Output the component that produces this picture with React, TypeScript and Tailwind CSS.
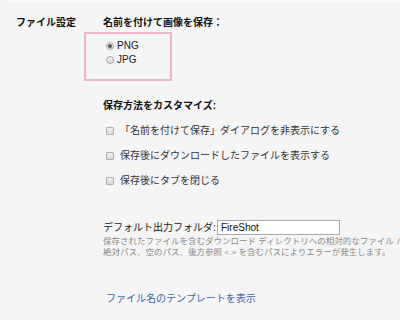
import React from 'react';

const Radio: React.FC<{ checked?: boolean; label: string }> = ({ checked, label }) => (
  <div className="flex items-center gap-[3px] h-[14px]">
    <span className="w-[8px] h-[8px] rounded-full border border-[#a8a8a8] bg-gradient-to-b from-[#f4f4f4] to-[#d8d8d8] flex items-center justify-center">
      {checked && <span className="w-[4px] h-[4px] rounded-full bg-[#555]" />}
    </span>
    <span className="text-[10px] leading-[14px] text-[#222]">{label}</span>
  </div>
);

const Check: React.FC<{ label: string }> = ({ label }) => (
  <div className="flex items-center gap-[6px] h-[14px] pl-[3px]">
    <span className="w-[8px] h-[8px] rounded-[1px] border border-[#b0b0b0] bg-gradient-to-b from-[#f2f2f2] to-[#d6d6d6]" />
    <span className="text-[10px] leading-[14px] text-[#333] whitespace-nowrap">{label}</span>
  </div>
);

export default function App() {
  return (
    <div
      className="w-[400px] h-[320px] overflow-hidden bg-[#f5f5f5] flex flex-col"
      style={{ fontFamily: '"Liberation Sans", "Noto Sans CJK JP", sans-serif' }}
    >
      <div className="h-[2px] ml-2 bg-[#fbfbfb]" />
      <div className="flex pt-[14px]">
        <div className="w-[103px] pl-[16px] shrink-0">
          <h2 className="text-[10px] leading-[14px] font-bold text-[#111]">ファイル設定</h2>
        </div>
        <div className="flex flex-col flex-1 min-w-0">
          <h3 className="text-[10px] leading-[14px] font-bold text-[#111]">名前を付けて画像を保存：</h3>

          <div className="mt-[2px] ml-[-19px] w-[88px] h-[49px] border-2 border-[#f2b3cf] pt-[5px] pl-[20px]">
            <Radio checked label="PNG" />
            <Radio label="JPG" />
          </div>

          <h3 className="mt-[18px] text-[10px] leading-[14px] font-bold text-[#111]">保存方法をカスタマイズ:</h3>
          <div className="mt-[11px] flex flex-col gap-[11px]">
            <Check label="「名前を付けて保存」ダイアログを非表示にする" />
            <Check label="保存後にダウンロードしたファイルを表示する" />
            <Check label="保存後にタブを閉じる" />
          </div>

          <div className="mt-[32px] flex items-center h-[15px]">
            <span className="text-[10px] leading-[14px] text-[#222] whitespace-nowrap w-[114px]">デフォルト出力フォルダ:</span>
            <input
              readOnly
              value="FireShot"
              className="w-[123px] h-[15px] border border-[#a9a9a9] bg-white px-[3px] text-[10px] text-[#111] outline-none"
            />
          </div>
          <div className="mt-[1px] text-[8.5px] leading-[11px] text-[#8a8a8a] whitespace-nowrap overflow-hidden">
            <p>保存されたファイルを含むダウンロード ディレクトリへの相対的なファイル パス</p>
            <p>絶対パス、空のパス、後方参照 <span className="text-[7px] italic">«..»</span> を含むパスによりエラーが発生します。</p>
          </div>

          <a className="mt-[34px] pl-[3px] text-[10px] leading-[14px] text-[#3a68b0] cursor-pointer">
            ファイル名のテンプレートを表示
          </a>
        </div>
      </div>
    </div>
  );
}
